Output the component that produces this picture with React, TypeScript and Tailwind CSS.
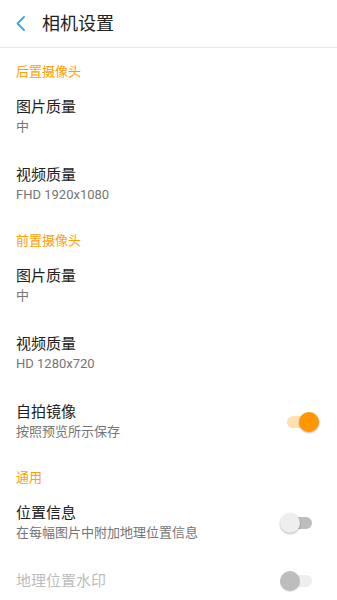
import React from "react";

type Item = {
  title: string;
  subtitle?: string;
  toggle?: "on" | "off" | "disabled";
  disabled?: boolean;
};

type Section = {
  header: string;
  items: Item[];
};

const sections: Section[] = [
  {
    header: "后置摄像头",
    items: [
      { title: "图片质量", subtitle: "中" },
      { title: "视频质量", subtitle: "FHD 1920x1080" },
    ],
  },
  {
    header: "前置摄像头",
    items: [
      { title: "图片质量", subtitle: "中" },
      { title: "视频质量", subtitle: "HD 1280x720" },
      { title: "自拍镜像", subtitle: "按照预览所示保存", toggle: "on" },
    ],
  },
  {
    header: "通用",
    items: [
      { title: "位置信息", subtitle: "在每幅图片中附加地理位置信息", toggle: "off" },
      { title: "地理位置水印", toggle: "disabled", disabled: true },
    ],
  },
];

function Toggle({ state }: { state: "on" | "off" | "disabled" }) {
  if (state === "on") {
    return (
      <div className="relative w-[32px] h-[20px] mr-[18px]">
        <div className="absolute top-[4px] left-0 right-[3px] h-[12px] rounded-full bg-[#ffe0b2]" />
        <div className="absolute top-0 right-0 w-[20px] h-[20px] rounded-full bg-[#ff9800] shadow-[0_1px_2px_rgba(0,0,0,0.3)]" />
      </div>
    );
  }
  const off = state === "off";
  return (
    <div className="relative w-[32px] h-[20px] mr-[25px]">
      <div
        className={`absolute top-[4px] left-[3px] right-0 h-[12px] rounded-full ${off ? "bg-[#bdbdbd]" : "bg-[#eeeeee]"}`}
      />
      <div
        className={`absolute top-0 left-0 w-[20px] h-[20px] rounded-full ${off ? "bg-[#eeeeee] shadow-[0_1px_2px_rgba(0,0,0,0.3)]" : "bg-[#bdbdbd] shadow-[0_1px_1px_rgba(0,0,0,0.12)]"}`}
      />
    </div>
  );
}

export default function App() {
  return (
    <div className="w-full min-h-[600px] bg-white font-['Roboto','Noto_Sans_CJK_SC',sans-serif]">
      <div className="h-[48px] border-b border-[#e8e8e8] flex items-center">
        <svg width="9" height="15" viewBox="0 0 9 15" className="ml-[16px]" fill="none">
          <polyline points="8,1 1.5,7.5 8,14" stroke="#33a9e8" strokeWidth="1.8" strokeLinecap="round" strokeLinejoin="round" />
        </svg>
        <span className="ml-[17px] text-[18px] leading-[24px] text-[#212121]">相机设置</span>
      </div>

      <div className="pt-px">
        {sections.map((s, si) => (
          <div key={si}>
            <div className="pt-[13px] px-[16px] text-[13px] leading-[20px] text-[#ffa000]">{s.header}</div>
            {s.items.map((it, ii) => (
              <div key={ii} className="flex items-center pl-[16px] pt-[15px] pb-[14px]">
                <div className="flex-1 min-w-0">
                  <div className={`text-[15px] leading-[20px] ${it.disabled ? "text-[#bdbdbd]" : "text-[#212121]"}`}>
                    {it.title}
                  </div>
                  {it.subtitle && (
                    <div className="text-[13px] leading-[19px] text-[#757575]">{it.subtitle}</div>
                  )}
                </div>
                {it.toggle && <Toggle state={it.toggle} />}
              </div>
            ))}
          </div>
        ))}
      </div>
    </div>
  );
}
